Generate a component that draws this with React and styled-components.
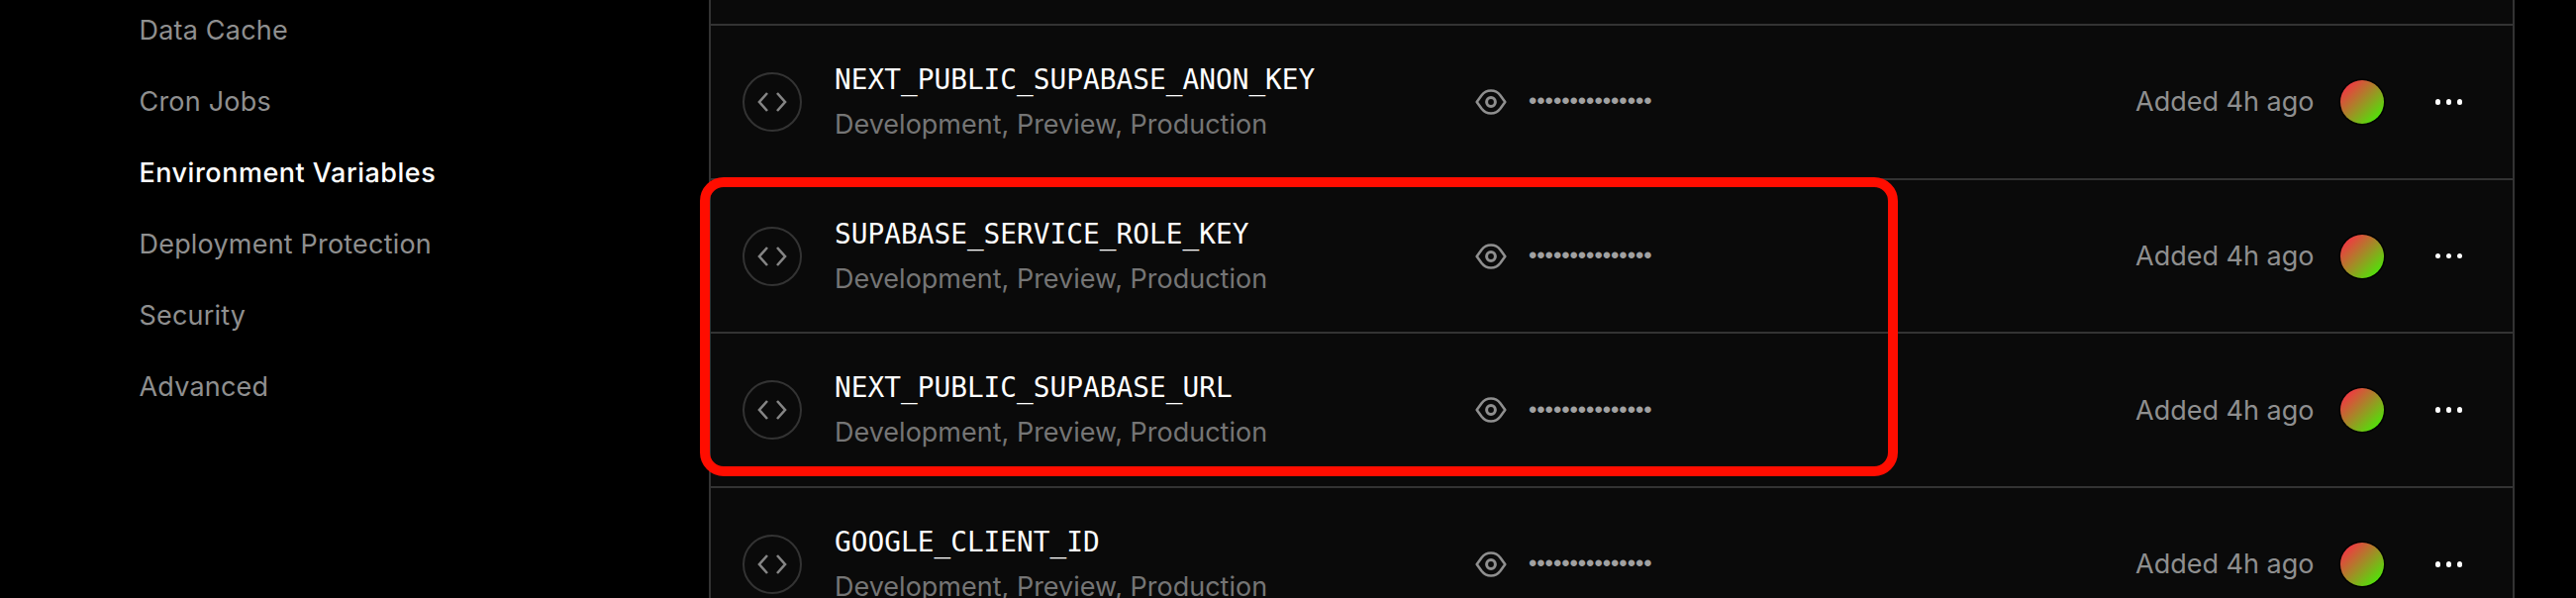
import React from "react";
import styled, { createGlobalStyle } from "styled-components";

const NAV_ITEMS = [
  "Data Cache",
  "Cron Jobs",
  "Environment Variables",
  "Deployment Protection",
  "Security",
  "Advanced",
];

const VARIABLES = [
  "NEXT_PUBLIC_SUPABASE_ANON_KEY",
  "SUPABASE_SERVICE_ROLE_KEY",
  "NEXT_PUBLIC_SUPABASE_URL",
  "GOOGLE_CLIENT_ID",
];

function CodeIcon() {
  return (
    <svg width="30" height="20" viewBox="0 0 30 20" fill="none">
      <path
        d="M10 1 2 10l8 9M20 1l8 9-8 9"
        stroke="#858585"
        strokeWidth="2.6"
      />
    </svg>
  );
}

function EyeIcon() {
  return (
    <svg width="32" height="26" viewBox="0 0 32 26" fill="none">
      <path
        d="M1.7 13 6.6 6.200C8.800 3.300 12 1.500 16 1.500s7.200 1.800 9.400 4.700l4.900 6.800-4.900 6.800c-2.200 2.900-5.400 4.700-9.400 4.700s-7.200-1.800-9.400-4.700Z"
        stroke="#8f8f8f"
        strokeWidth="2.6"
        strokeLinejoin="round"
      />
      <circle cx="16" cy="13" r="4.400" stroke="#8f8f8f" strokeWidth="3" />
    </svg>
  );
}

function VariableRow({ name }) {
  return (
    <Row>
      <Details>
        <CodeBadge>
          <CodeIcon />
        </CodeBadge>
        <Labels>
          <VariableName>{name}</VariableName>
          <Targets>Development, Preview, Production</Targets>
        </Labels>
      </Details>
      <Secret>
        <EyeIcon />
        <Masked>•••••••••••••••</Masked>
      </Secret>
      <Meta>
        <Added>Added 4h ago</Added>
        <Avatar />
        <MoreButton>
          <Dot />
          <Dot />
          <Dot />
        </MoreButton>
      </Meta>
    </Row>
  );
}

export default function App() {
  return (
    <>
      <GlobalStyle />
      <Page>
        <Sidebar>
          {NAV_ITEMS.map((item) => (
            <NavItem key={item} $active={item === "Environment Variables"}>
              {item}
            </NavItem>
          ))}
        </Sidebar>
        <Panel>
          <PanelTop />
          {VARIABLES.map((name) => (
            <VariableRow key={name} name={name} />
          ))}
        </Panel>
        <Highlight />
      </Page>
    </>
  );
}

const GlobalStyle = createGlobalStyle`
  html, body {
    margin: 0;
    padding: 0;
    background: #000;
  }
  * {
    box-sizing: border-box;
  }
`;

const Page = styled.div`
  position: relative;
  display: flex;
  width: 2602px;
  height: 604px;
  overflow: hidden;
  background: #000;
  font-family: Inter, "Liberation Sans", sans-serif;
`;

const Sidebar = styled.nav`
  display: flex;
  flex-direction: column;
  flex: none;
  width: 716px;
  margin-top: -6px;
  padding-left: 140.500px;
`;

const NavItem = styled.a`
  display: flex;
  align-items: center;
  height: 72px;
  font-size: 27px;
  letter-spacing: ${(props) => (props.$active ? "0.5px" : "0.2px")};
  color: ${(props) => (props.$active ? "#fff" : "#8f8f8f")};
  font-weight: ${(props) => (props.$active ? 500 : 400)};
`;

const Panel = styled.section`
  flex: none;
  width: 1824px;
  height: 700px;
  background: #0a0a0a;
  border-left: 2px solid #333;
  border-right: 2px solid #333;
`;

const PanelTop = styled.div`
  height: 24px;
`;

const Row = styled.div`
  display: flex;
  align-items: center;
  height: 155.700px;
  padding: 0 51px 0 32px;
  border-top: 2px solid #333;
`;

const Details = styled.div`
  display: flex;
  align-items: center;
  gap: 33px;
  flex: none;
  width: 740px;
`;

const CodeBadge = styled.div`
  display: flex;
  align-items: center;
  justify-content: center;
  flex: none;
  width: 60px;
  height: 60px;
  border: 2px solid #333;
  border-radius: 50%;
`;

const Labels = styled.div`
  display: flex;
  flex-direction: column;
  gap: 12px;
  white-space: nowrap;
`;

const VariableName = styled.div`
  font-family: "DejaVu Sans Mono", monospace;
  font-size: 27.800px;
  line-height: 33px;
  color: #fff;
`;

const Targets = styled.div`
  font-size: 27px;
  line-height: 33px;
  color: #757575;
`;

const Secret = styled.div`
  display: flex;
  align-items: center;
  gap: 19px;
`;

const Masked = styled.span`
  padding-top: 2px;
  font-family: "Liberation Mono", monospace;
  font-size: 24px;
  letter-spacing: -6.100px;
  color: #a1a1a1;
`;

const Meta = styled.div`
  display: flex;
  align-items: center;
  margin-left: auto;
`;

const Added = styled.span`
  font-size: 27px;
  color: #8f8f8f;
`;

const Avatar = styled.div`
  flex: none;
  width: 44px;
  height: 44px;
  margin-left: 26px;
  border-radius: 50%;
  background: linear-gradient(135deg, #f03a42 14%, #52e00a 86%);
  box-shadow: 0 0 0 1.500px #000;
`;

const MoreButton = styled.div`
  display: flex;
  align-items: center;
  gap: 5.500px;
  margin-left: 52px;
`;

const Dot = styled.span`
  width: 5.500px;
  height: 5.500px;
  border-radius: 50%;
  background: #fff;
`;

/* annotation drawn over the screenshot */
const Highlight = styled.div`
  position: absolute;
  left: 707px;
  top: 179px;
  width: 1210px;
  height: 302px;
  border: 10px solid #ff0d00;
  border-radius: 24px;
`;
